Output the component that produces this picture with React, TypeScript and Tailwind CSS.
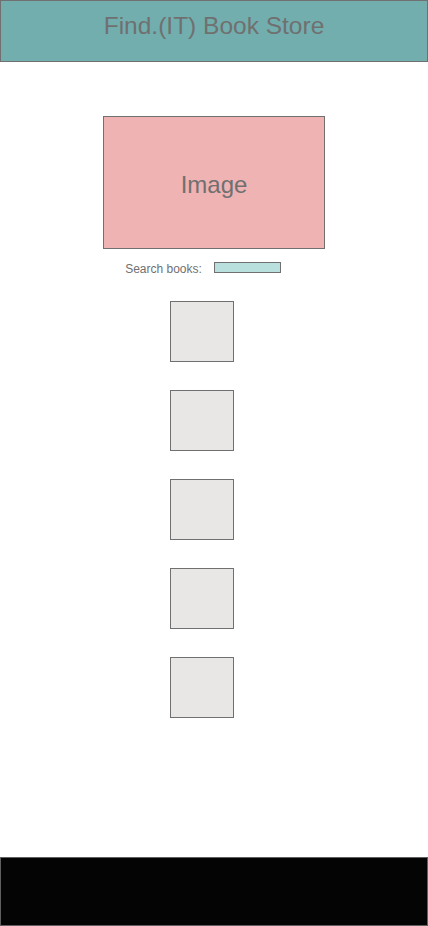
const books = [1, 2, 3, 4, 5];

function Header() {
  return (
    <header className="h-[62px] border border-[#707070] bg-[#72aeae] pt-[10px] text-center">
      <h1 className="text-[24.5px] leading-[30px] text-[#707070]">
        Find.(IT) Book Store
      </h1>
    </header>
  );
}

function BookTile() {
  return (
    <div className="h-[61px] w-[64px] border border-[#707070] bg-[#e8e7e5]" />
  );
}

export default function App() {
  return (
    <div
      className="flex min-h-[926px] w-[428px] flex-col bg-white"
      style={{ fontFamily: '"Liberation Sans", Arial, sans-serif' }}
    >
      <Header />

      <main className="flex flex-col items-center">
        <div className="mt-[54px] flex h-[133px] w-[222px] items-center justify-center border border-[#707070] bg-[#efb3b3] pt-[4px]">
          <span className="text-[24px] text-[#707070]">Image</span>
        </div>

        <div className="mt-[13px] flex h-[11px] w-full items-center justify-center gap-[12px] pr-[22px]">
          <span className="pt-[2px] text-[12px] leading-none text-[#707070]">
            Search books:
          </span>
          <input
            type="text"
            aria-label="Search books"
            className="h-[11px] w-[67px] border border-[#707070] bg-[#b9e0dd] outline-none"
          />
        </div>

        <div className="mt-[28px] flex w-full flex-col items-center gap-[28px] pr-[24px]">
          {books.map((b) => (
            <BookTile key={b} />
          ))}
        </div>
      </main>

      <footer className="mt-auto h-[69px] border border-[#5f5f5f] bg-[#040404]" />
    </div>
  );
}
